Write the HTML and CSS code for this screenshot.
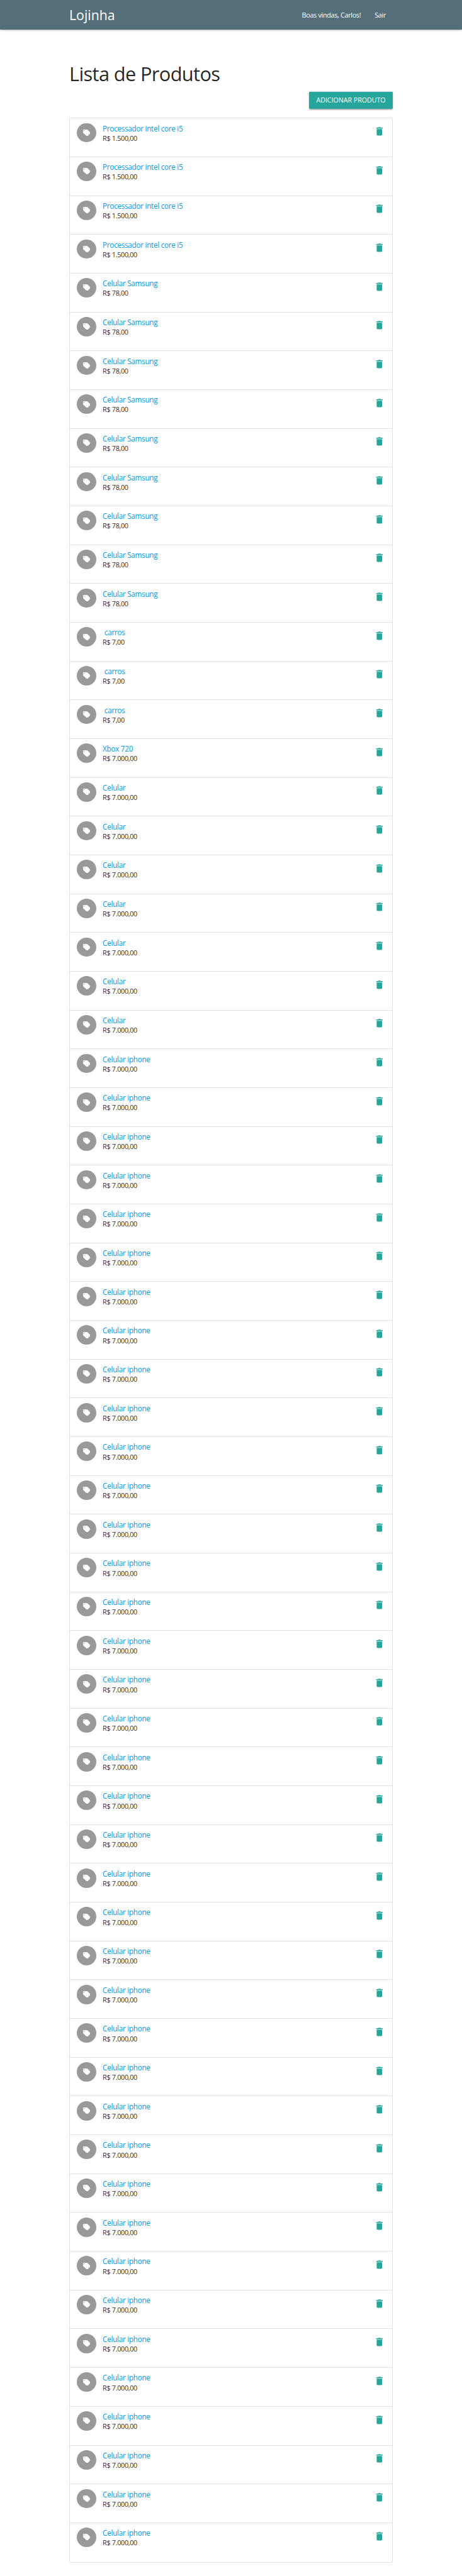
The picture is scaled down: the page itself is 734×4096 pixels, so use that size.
FILE: index.html
```html
<!DOCTYPE html>
<html lang="pt-br">
<head>
<meta charset="utf-8">
<title>Lojinha</title>
<link rel="stylesheet" href="styles.css">
</head>
<body>
<svg class="sprite" aria-hidden="true">
  <symbol id="icon-tag" viewBox="0 0 16 14"><path fill-rule="evenodd" d="M1 0H8.300Q9.100 0 9.700.6L15.600 6.500Q16.300 7.300 15.600 8.100L10.600 13.300Q9.900 14 9 14H8.300Q7.500 14 6.900 13.400L.6 7.400Q0 6.800 0 6V1Q0 0 1 0ZM2.500 1.200A1.100 1.100 0 1 0 2.500 3.400A1.100 1.100 0 1 0 2.500 1.200Z"/></symbol>
  <symbol id="icon-delete" viewBox="0 0 24 24"><path d="M6 19c0 1.1.9 2 2 2h8c1.1 0 2-.9 2-2V7H6v12zM19 4h-3.500l-1-1h-5l-1 1H5v2h14V4z"/></symbol>
</svg>
<nav class="navbar">
  <div class="container navbar-inner">
    <a class="brand">Lojinha</a>
    <ul class="menu">
      <li class="menu-greeting">Boas vindas, Carlos!</li>
      <li class="menu-exit">Sair</li>
    </ul>
  </div>
</nav>
<main class="container">
  <h1 class="title"><span>Lista de Produtos</span></h1>
  <div class="actions"><a class="button"><span>Adicionar produto</span></a></div>
  <ul class="collection" id="products"></ul>
</main>
<script src="products.js"></script>
</body>
</html>
```
FILE: products.js
```js
const groups = [
  { name: "Processador intel core i5", price: "R$ 1.500,00", count: 4 },
  { name: "Celular Samsung", price: "R$ 78,00", count: 9 },
  { name: "\u00a0carros", price: "R$ 7,00", count: 3 },
  { name: "Xbox 720", price: "R$ 7.000,00", count: 1 },
  { name: "Celular", price: "R$ 7.000,00", count: 7 },
  { name: "Celular iphone", price: "R$ 7.000,00", count: 39 }
];

const row = ({ name, price }) => `
  <li class="item">
    <span class="avatar"><svg class="tag"><use href="#icon-tag"/></svg></span>
    <div class="info"><a class="name">${name}</a><span class="price">${price}</span></div>
    <svg class="delete"><use href="#icon-delete"/></svg>
  </li>`;

document.getElementById("products").innerHTML =
  groups.map(group => row(group).repeat(group.count)).join("");
```
FILE: styles.css
```css
html {
  font-size: 7.343px;
}

* {
  box-sizing: border-box;
}

body {
  margin: 0;
  background: #fff;
  color: rgba(0, 0, 0, 0.87);
  font-family: "Open Sans", "Noto Sans", sans-serif;
}

.sprite {
  display: none;
}

.container {
  width: 70rem;
  margin: 0 auto;
}

.navbar {
  height: 6.4rem;
  background: #546e7a;
  color: #fff;
  box-shadow: 0 0.2rem 0.2rem 0 rgba(0, 0, 0, 0.14), 0 0.3rem 0.1rem -0.2rem rgba(0, 0, 0, 0.12), 0 0.1rem 0.5rem 0 rgba(0, 0, 0, 0.2);
}

.navbar-inner {
  display: flex;
  justify-content: space-between;
  line-height: 6.4rem;
}

.brand {
  font-size: 2.9rem;
}

.menu {
  display: flex;
  gap: 3rem;
  margin: 0;
  padding: 0 1.5rem 0 0;
  list-style: none;
  font-size: 1.48rem;
  letter-spacing: -0.047rem;
}

.title {
  margin: 6.4rem 0 0;
  height: 7.1rem;
  line-height: 6.4rem;
  font-size: 4.2rem;
  font-weight: 400;
  letter-spacing: -0.09rem;
}

.actions {
  display: flex;
  justify-content: flex-end;
}

.button {
  display: block;
  width: 18.1rem;
  height: 3.6rem;
  padding: 0 1.55rem;
  border-radius: 0.2rem;
  background: #26a69a;
  color: #fff;
  font-size: 1.45rem;
  line-height: 3.6rem;
  text-transform: uppercase;
  white-space: nowrap;
  box-shadow: 0 0.2rem 0.2rem 0 rgba(0, 0, 0, 0.14), 0 0.3rem 0.1rem -0.2rem rgba(0, 0, 0, 0.12), 0 0.1rem 0.5rem 0 rgba(0, 0, 0, 0.2);
}

.collection {
  margin: 2rem 0 0;
  padding: 0;
  border: 1px solid #e0e0e0;
  border-radius: 0.2rem;
  list-style: none;
}

.item {
  display: flex;
  height: 8.4rem;
  padding: 1rem 1.6rem 0 1.5rem;
  border-bottom: 1px solid #e0e0e0;
}

.item:last-child {
  border-bottom: 0;
}

.avatar {
  display: flex;
  align-items: center;
  justify-content: center;
  width: 4.2rem;
  height: 4.2rem;
  border-radius: 50%;
  background: #999;
}

.tag {
  width: 1.6rem;
  height: 1.4rem;
  fill: #fff;
}

.info {
  display: flex;
  flex: 1;
  flex-direction: column;
  padding-left: 1.4rem;
  line-height: 2.2rem;
  white-space: nowrap;
}

.name {
  color: #039be5;
  font-size: 1.6rem;
  letter-spacing: -0.04rem;
}

.price {
  font-size: 1.48rem;
  letter-spacing: -0.047rem;
}

.delete {
  width: 2.4rem;
  height: 2.4rem;
  margin-top: 0.6rem;
  fill: #26a69a;
}
```
